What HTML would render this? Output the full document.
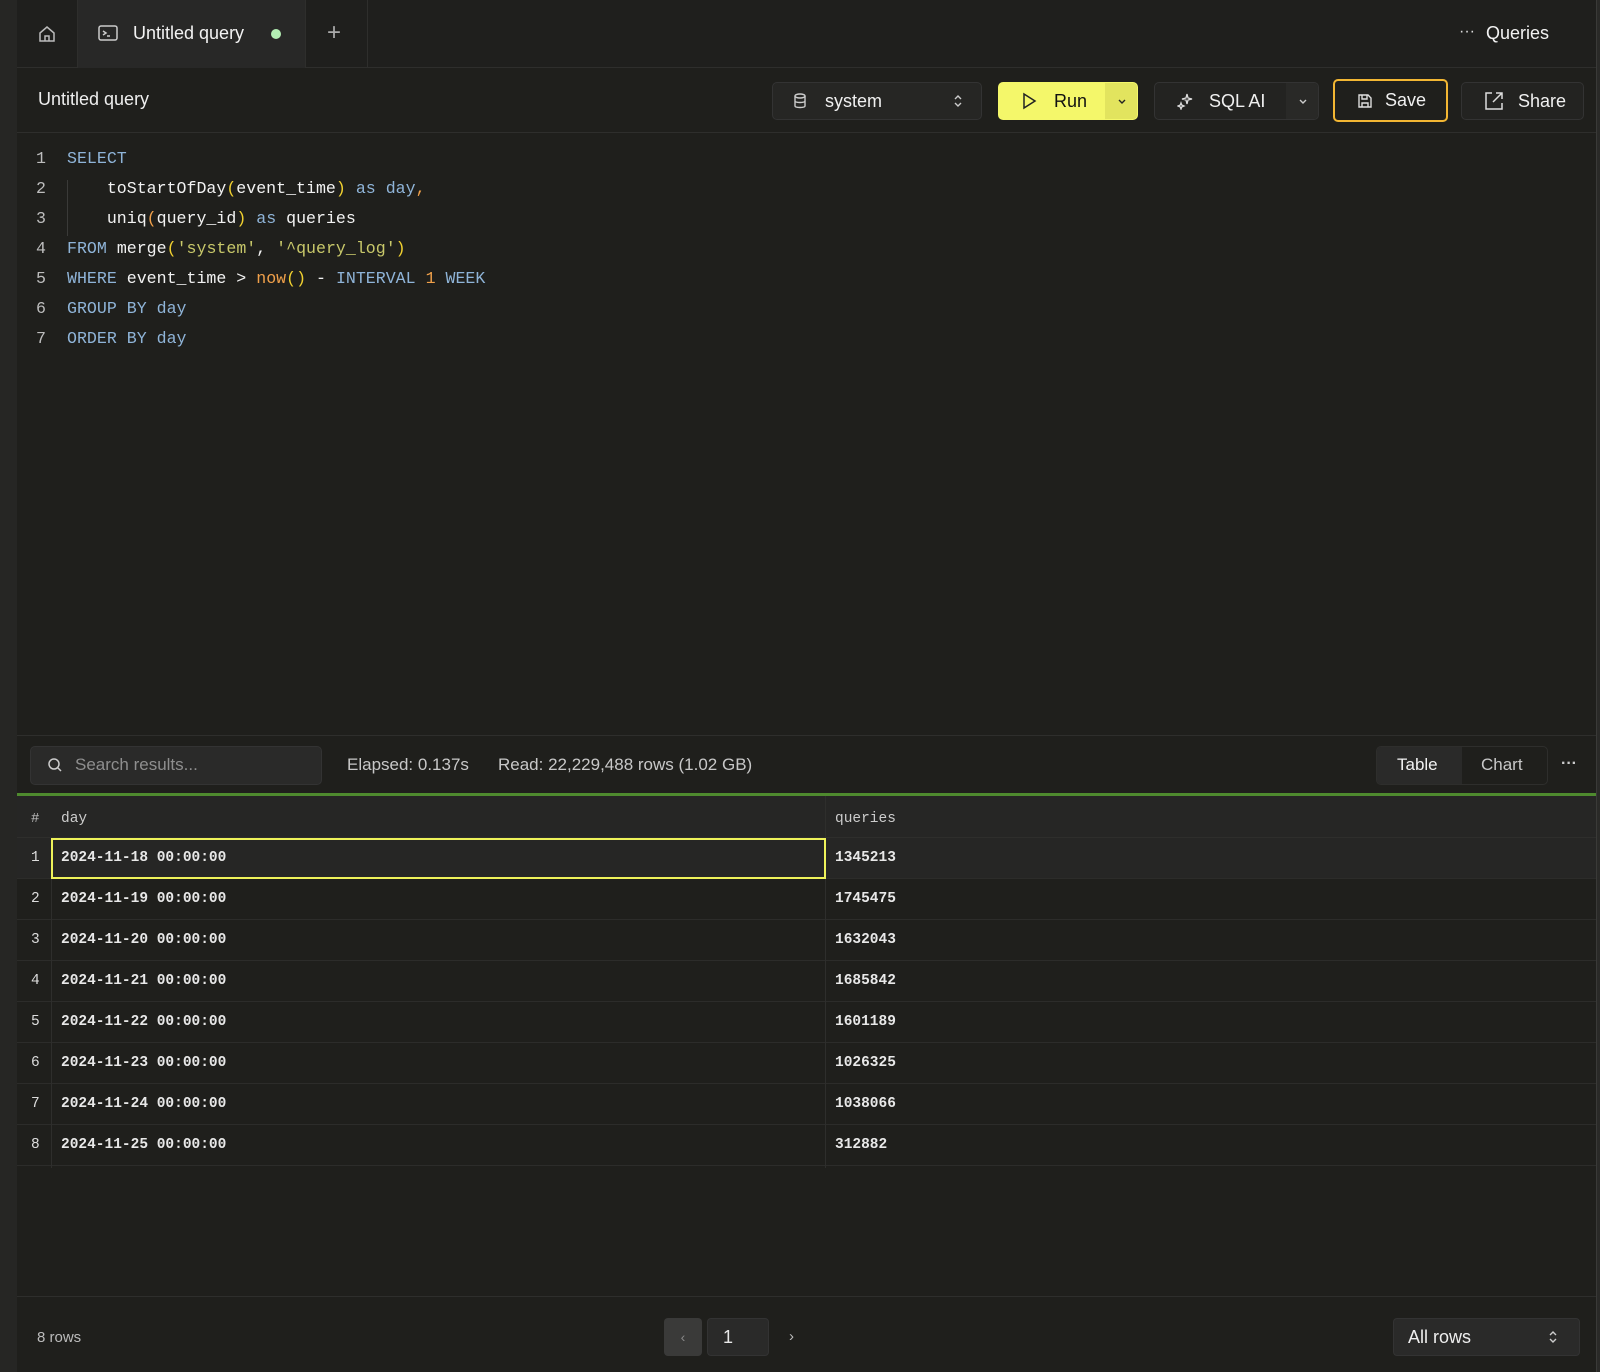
<!DOCTYPE html>
<html><head><meta charset="utf-8"><style>
*{box-sizing:border-box;margin:0;padding:0}
body{width:1600px;height:1372px;background:#1f1f1c;font-family:"Liberation Sans",sans-serif;color:#e8e8e8;position:relative;overflow:hidden}
.abs{position:absolute}
.mono{font-family:"Liberation Mono",monospace}
.btn{position:absolute;border:1px solid #333;border-radius:5px;background:#232321;display:flex;align-items:center;font-size:18px;color:#f0f0f0}
.code div{position:absolute;left:0;height:30px;line-height:30px;white-space:pre;font-size:16.6px}
.ln{color:#bdbdbd;width:46px;text-align:right;padding-right:0}
.k{color:#8fb4d8}.s{color:#c8c86a}.o{color:#f0a04a}.p{color:#f0d030}.w{color:#f2f2f2}
.row{position:absolute;left:17px;width:1579px;height:41px;border-bottom:1px solid #2c2c2a;font-size:14.5px;font-weight:bold;font-family:"Liberation Mono",monospace}
.row span{position:absolute;top:0;line-height:41px;white-space:nowrap}
</style></head><body>
<div class="abs" style="left:0;top:0;width:17px;height:1372px;background:#262624"></div>
<div class="abs" style="right:0;top:0;width:4px;height:1372px;background:#2a2a28;border-left:1px solid #3a3a38"></div>
<div class="abs" style="left:17px;top:0;width:1579px;height:68px;background:#1f1f1d;border-bottom:1px solid #2e2e2c"></div>
<div class="abs" style="left:77px;top:0;width:229px;height:68px;background:#282827;border-left:1px solid #2e2e2c;border-right:1px solid #2e2e2c"></div>
<div class="abs" style="left:367px;top:0;width:1px;height:68px;background:#2e2e2c"></div>
<svg class="abs" style="left:37px;top:24px" width="20" height="20" viewBox="0 0 20 20" fill="none" stroke="#bbb" stroke-width="1.5"><path d="M3 9 L10 3 L17 9 V17 H3 Z M8 17 V12 H12 V17"/></svg>
<svg class="abs" style="left:98px;top:24px" width="20" height="18" viewBox="0 0 20 18" fill="none" stroke="#ccc" stroke-width="1.5"><rect x="1" y="2" width="18" height="14" rx="2"/><path d="M5 7 L8 9 L5 11 M9 12 H12"/></svg>
<div class="abs" style="left:133px;top:23px;font-size:18px;color:#f2f2f2">Untitled query</div>
<div class="abs" style="left:271px;top:29px;width:10px;height:10px;border-radius:50%;background:#b4f0b4"></div>
<div class="abs" style="left:327px;top:19px;font-size:24px;color:#aaa;font-weight:300">+</div>
<div class="abs" style="left:1459px;top:23px;font-size:16px;color:#ddd">···</div>
<div class="abs" style="left:1486px;top:23px;font-size:18px;color:#f2f2f2">Queries</div>
<div class="abs" style="left:17px;top:68px;width:1579px;height:65px;border-bottom:1px solid #2e2e2c"></div>
<div class="abs" style="left:38px;top:89px;font-size:18px;color:#eee">Untitled query</div>
<div class="btn" style="left:772px;top:82px;width:210px;height:38px;background:#262624">
 <svg style="margin-left:20px" width="14" height="16" viewBox="0 0 14 16" fill="none" stroke="#ccc" stroke-width="1.4"><ellipse cx="7" cy="3" rx="5" ry="2"/><path d="M2 3 V13 C2 15 12 15 12 13 V3 M2 8 C2 10 12 10 12 8"/></svg>
 <span style="margin-left:18px">system</span>
 <svg style="position:absolute;right:18px" width="10" height="16" viewBox="0 0 10 16" fill="none" stroke="#ccc" stroke-width="1.4"><path d="M2 6 L5 3 L8 6 M2 10 L5 13 L8 10"/></svg>
</div>
<div class="btn" style="left:998px;top:82px;width:140px;height:38px;background:#f4f76a;border-color:#f4f76a;color:#111;overflow:hidden">
 <svg style="margin-left:22px" width="16" height="18" viewBox="0 0 16 18" fill="none" stroke="#222" stroke-width="1.5"><path d="M3 2 L14 9 L3 16 Z"/></svg>
 <span style="margin-left:17px">Run</span>
 <div style="position:absolute;left:106px;top:0;width:34px;height:38px;background:#e2e45e;display:flex;align-items:center;justify-content:center"><svg width="10" height="8" viewBox="0 0 10 8" fill="none" stroke="#222" stroke-width="1.4"><path d="M2 2 L5 5 L8 2"/></svg></div>
</div>
<div class="btn" style="left:1154px;top:82px;width:165px;height:38px;overflow:hidden">
 <svg style="margin-left:22px" width="18" height="18" viewBox="0 0 18 18" fill="none" stroke="#ddd" stroke-width="1.3"><path d="M10 2 L11 6 L15 7 L11 8 L10 12 L9 8 L5 7 L9 6 Z M4 11 L4.7 13 L7 14 L4.7 15 L4 17 L3.3 15 L1 14 L3.3 13Z"/></svg>
 <span style="margin-left:14px">SQL AI</span>
 <div style="position:absolute;left:131px;top:0;width:34px;height:38px;background:#292927;display:flex;align-items:center;justify-content:center"><svg width="10" height="8" viewBox="0 0 10 8" fill="none" stroke="#ccc" stroke-width="1.4"><path d="M2 2 L5 5 L8 2"/></svg></div>
</div>
<div class="btn" style="left:1333px;top:79px;width:115px;height:43px;border:2px solid #f2b633;background:#1f1f1c">
 <svg style="margin-left:22px" width="16" height="16" viewBox="0 0 16 16" fill="none" stroke="#ddd" stroke-width="1.4"><path d="M2 2 H11 L14 5 V14 H2 Z M5 2 V6 H10 V2 M5 14 V10 H11 V14"/></svg>
 <span style="margin-left:12px">Save</span>
</div>
<div class="btn" style="left:1461px;top:82px;width:123px;height:38px">
 <svg style="margin-left:21px" width="22" height="22" viewBox="0 0 22 22" fill="none" stroke="#ddd" stroke-width="1.5"><path d="M9 3 H3 V19 H19 V13 M13 3 H19 V9 M19 3 L10 12"/></svg>
 <span style="margin-left:13px">Share</span>
</div>
<div class="abs code mono" style="left:0;top:144px;width:800px">
 <div class="ln" style="top:0">1</div><div style="top:0;left:67px" class="k">SELECT</div>
 <div class="ln" style="top:30px">2</div><div style="top:30px;left:67px"><span class="w">    toStartOfDay</span><span class="p">(</span><span class="w">event_time</span><span class="p">)</span> <span class="k">as day</span><span class="o">,</span></div>
 <div class="ln" style="top:60px">3</div><div style="top:60px;left:67px"><span class="w">    uniq</span><span class="o">(</span><span class="w">query_id</span><span class="p">)</span> <span class="k">as</span> <span class="w">queries</span></div>
 <div class="ln" style="top:90px">4</div><div style="top:90px;left:67px"><span class="k">FROM</span> <span class="w">merge</span><span class="p">(</span><span class="s">'system'</span><span class="w">, </span><span class="s">'^query_log'</span><span class="p">)</span></div>
 <div class="ln" style="top:120px">5</div><div style="top:120px;left:67px"><span class="k">WHERE</span> <span class="w">event_time &gt;</span> <span class="o">now</span><span class="p">()</span> <span class="w">-</span> <span class="k">INTERVAL</span> <span class="o">1</span> <span class="k">WEEK</span></div>
 <div class="ln" style="top:150px">6</div><div style="top:150px;left:67px" class="k">GROUP BY day</div>
 <div class="ln" style="top:180px">7</div><div style="top:180px;left:67px" class="k">ORDER BY day</div>
</div>
<div class="abs" style="left:67px;top:180px;width:1px;height:56px;background:#3a3a38"></div>
<div class="abs" style="left:17px;top:735px;width:1579px;height:1px;background:#2e2e2c"></div>
<div class="abs" style="left:30px;top:746px;width:292px;height:39px;background:#2a2a29;border:1px solid #333;border-radius:5px"></div>
<svg class="abs" style="left:47px;top:757px" width="16" height="16" viewBox="0 0 16 16" fill="none" stroke="#ccc" stroke-width="1.5"><circle cx="7" cy="7" r="5"/><path d="M11 11 L14 14"/></svg>
<div class="abs" style="left:75px;top:755px;font-size:17px;color:#8e8e8e">Search results...</div>
<div class="abs" style="left:347px;top:755px;font-size:17px;color:#c8c8c8">Elapsed: 0.137s</div>
<div class="abs" style="left:498px;top:755px;font-size:17px;color:#c8c8c8">Read: 22,229,488 rows (1.02 GB)</div>
<div class="abs" style="left:1376px;top:746px;width:172px;height:39px;border:1px solid #2e2e2c;border-radius:5px;background:#1f1f1c;overflow:hidden"><div style="width:85px;height:39px;background:#2a2a29"></div></div>
<div class="abs" style="left:1397px;top:755px;font-size:17px;color:#f2f2f2">Table</div>
<div class="abs" style="left:1481px;top:755px;font-size:17px;color:#c8c8c8">Chart</div>
<div class="abs" style="left:1561px;top:755px;font-size:16px;color:#ccc;font-weight:bold">···</div>
<div class="abs" style="left:17px;top:793px;width:1579px;height:3px;background:#4e8a2e"></div>
<div class="abs" style="left:17px;top:796px;width:1579px;height:42px;background:#262625;border-bottom:1px solid #2e2e2c"></div>
<div class="abs mono" style="left:31px;top:811px;font-size:14px;color:#bbb">#</div>
<div class="abs mono" style="left:61px;top:811px;font-size:14.5px;color:#ccc">day</div>
<div class="abs mono" style="left:835px;top:811px;font-size:14.5px;color:#ccc">queries</div>
<div class="abs" style="left:17px;top:838px;width:1579px;height:41px;background:#262625"></div>
<div class="row" style="top:838px"><span style="left:14px;font-weight:normal;color:#ddd">1</span><span style="left:44px">2024-11-18 00:00:00</span><span style="left:818px">1345213</span></div>
<div class="row" style="top:879px"><span style="left:14px;font-weight:normal;color:#ddd">2</span><span style="left:44px">2024-11-19 00:00:00</span><span style="left:818px">1745475</span></div>
<div class="row" style="top:920px"><span style="left:14px;font-weight:normal;color:#ddd">3</span><span style="left:44px">2024-11-20 00:00:00</span><span style="left:818px">1632043</span></div>
<div class="row" style="top:961px"><span style="left:14px;font-weight:normal;color:#ddd">4</span><span style="left:44px">2024-11-21 00:00:00</span><span style="left:818px">1685842</span></div>
<div class="row" style="top:1002px"><span style="left:14px;font-weight:normal;color:#ddd">5</span><span style="left:44px">2024-11-22 00:00:00</span><span style="left:818px">1601189</span></div>
<div class="row" style="top:1043px"><span style="left:14px;font-weight:normal;color:#ddd">6</span><span style="left:44px">2024-11-23 00:00:00</span><span style="left:818px">1026325</span></div>
<div class="row" style="top:1084px"><span style="left:14px;font-weight:normal;color:#ddd">7</span><span style="left:44px">2024-11-24 00:00:00</span><span style="left:818px">1038066</span></div>
<div class="row" style="top:1125px"><span style="left:14px;font-weight:normal;color:#ddd">8</span><span style="left:44px">2024-11-25 00:00:00</span><span style="left:818px">312882</span></div>
<div class="abs" style="left:825px;top:796px;width:1px;height:372px;background:#2e2e2c"></div>
<div class="abs" style="left:51px;top:838px;width:1px;height:330px;background:#2e2e2c"></div>
<div class="abs" style="left:51px;top:838px;width:775px;height:41px;border:2px solid #eef25a"></div>
<div class="abs" style="left:17px;top:1296px;width:1579px;height:1px;background:#2e2e2c"></div>
<div class="abs" style="left:37px;top:1329px;font-size:15px;color:#bbb">8 rows</div>
<div class="abs" style="left:664px;top:1318px;width:38px;height:38px;background:#3a3a39;border-radius:4px;color:#888;text-align:center;line-height:38px;font-size:14px">‹</div>
<div class="abs" style="left:707px;top:1318px;width:62px;height:38px;background:#2a2a29;border:1px solid #333;border-radius:4px;font-size:18px;padding-left:15px;line-height:36px">1</div>
<div class="abs" style="left:789px;top:1328px;font-size:15px;color:#bbb">›</div>
<div class="abs" style="left:1393px;top:1318px;width:187px;height:38px;background:#2a2a29;border:1px solid #333;border-radius:4px"></div>
<div class="abs" style="left:1408px;top:1327px;font-size:18px;color:#eee">All rows</div>
<svg class="abs" style="left:1548px;top:1329px" width="10" height="16" viewBox="0 0 10 16" fill="none" stroke="#ccc" stroke-width="1.4"><path d="M2 6 L5 3 L8 6 M2 10 L5 13 L8 10"/></svg>
</body></html>
